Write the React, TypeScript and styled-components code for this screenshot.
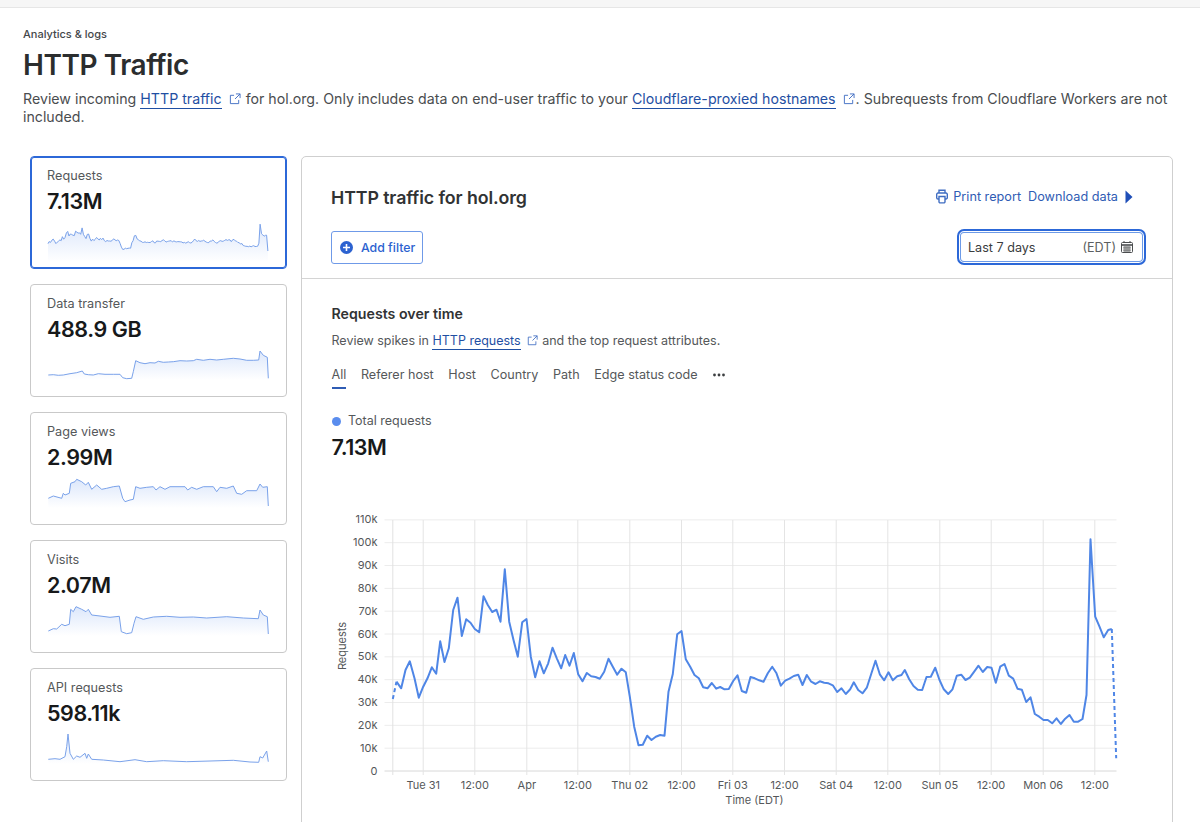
import React from "react";
import styled, { createGlobalStyle } from "styled-components";

type P = [number, number];

const GlobalStyle = createGlobalStyle`
  html, body { margin: 0; padding: 0; height: 822px; overflow: hidden; background: #fff; }
  body { font-family: Inter, "Liberation Sans", sans-serif; color: #36393a; -webkit-font-smoothing: antialiased; }
  * { box-sizing: border-box; }
`;

const TopBar = styled.div`
  height: 8px;
  background: #f6f6f6;
  border-bottom: 1px solid #e6e6e6;
`;
const PageHead = styled.header`
  padding: 18px 23px 0;
`;
const Crumb = styled.div`
  font-size: 11px;
  line-height: 16px;
  font-weight: 500;
  color: #44474a;
`;
const Title = styled.h1`
  margin: 5px 0 0;
  font-size: 28px;
  line-height: 36px;
  font-weight: 600;
  letter-spacing: -0.45px;
  color: #2b2d2e;
`;
const Description = styled.p`
  margin: 7px 0 0;
  font-size: 14.2px;
  line-height: 18px;
  color: #4a4d4f;
`;
const DocLink = styled.a`
  color: #1f4fa3;
  border-bottom: 1px solid #1f4fa3;
  padding-bottom: 1px;
`;
const ExtIcon = styled.svg<{ $gap: number }>`
  display: inline-block;
  vertical-align: -1px;
  margin: 0 1px 0 ${(p) => p.$gap}px;
  color: #3f6dc2;
`;
const Content = styled.main`
  display: flex;
  gap: 14px;
  margin-top: 30px;
  padding: 0 27px 0 30px;
  align-items: flex-start;
`;
const Sidebar = styled.aside`
  width: 257px;
  flex: none;
  display: flex;
  flex-direction: column;
  gap: 15px;
`;
const MetricCard = styled.section<{ $active?: boolean }>`
  height: 113px;
  border: 1px solid ${(p) => (p.$active ? "#2c68d8" : "#c9c9c9")};
  box-shadow: ${(p) => (p.$active ? "inset 0 0 0 1px #2c68d8" : "none")};
  border-radius: 4px;
  padding: 11px 0 0;
  display: flex;
  flex-direction: column;
  background: #fff;
`;
const MetricLabel = styled.div`
  margin-left: 16px;
  font-size: 12.7px;
  line-height: 16px;
  color: #55585a;
`;
const MetricValue = styled.div`
  margin: 3px 0 0 16px;
  font-size: 21.5px;
  line-height: 28px;
  font-weight: 600;
  letter-spacing: -0.4px;
  color: #17191a;
`;
const Spark = styled.svg`
  display: block;
  flex: none;
  margin-top: auto;
`;
const Panel = styled.section`
  flex: 1;
  height: 760px;
  border: 1px solid #cfcfcf;
  border-radius: 5px 5px 0 0;
  background: #fff;
`;
const PanelHead = styled.div`
  padding: 23px 26px 13px 29px;
  border-bottom: 1px solid #d4d4d4;
  height: 122px;
`;
const HeadRow = styled.div<{ $second?: boolean }>`
  display: flex;
  justify-content: space-between;
  align-items: center;
  height: 36px;
  margin-top: ${(p) => (p.$second ? "13px" : "0")};
`;
const PanelTitle = styled.h2`
  margin: 0;
  font-size: 17.8px;
  line-height: 24px;
  font-weight: 600;
  letter-spacing: -0.1px;
  color: #313334;
`;
const HeadActions = styled.div`
  display: flex;
  align-items: center;
  margin: -3px 13px 0 0;
  font-size: 12.7px;
  line-height: 16px;
  color: #2f5cb4;
`;
const ActionText = styled.span`
  margin-right: 7px;
`;
const PrintIcon = styled.svg`
  margin-right: 5px;
`;
const AddFilter = styled.button`
  width: 92px;
  height: 33px;
  display: flex;
  align-items: center;
  gap: 8px;
  padding: 0 0 0 8px;
  background: #fff;
  border: 1px solid #6f9ae8;
  border-radius: 3px;
  font: 500 12.3px Inter, "Liberation Sans", sans-serif;
  color: #2c62d0;
`;
const DateBox = styled.div`
  width: 189px;
  height: 36px;
  display: flex;
  align-items: center;
  padding: 0 11px 0 9px;
  border: 2px solid #2c68d8;
  border-radius: 7px;
  box-shadow: inset 0 0 0 1px #fff, inset 0 0 0 2px #6d9be8;
  font-size: 12.6px;
  color: #3a3d3e;
`;
const DateTz = styled.span`
  margin-left: auto;
  margin-right: 5px;
  color: #5c5f61;
`;
const PanelBody = styled.div`
  padding: 25px 0 0 29.5px;
`;
const SectionTitle = styled.h3`
  margin: 0;
  font-size: 14.2px;
  line-height: 20px;
  font-weight: 600;
  color: #313334;
`;
const SectionText = styled.p`
  margin: 7px 0 0;
  font-size: 12.5px;
  line-height: 20px;
  color: #55585a;
`;
const Tabs = styled.nav`
  margin-top: 14px;
  display: flex;
  align-items: flex-start;
  gap: 14.6px;
  font-size: 12.6px;
  line-height: 20px;
  height: 24px;
  color: #55585a;
`;
const Tab = styled.span<{ $active?: boolean }>`
  display: block;
  height: 24px;
  border-bottom: ${(p) => (p.$active ? "2px solid #2f5cb4" : "none")};
`;
const More = styled.svg`
  margin: 8px 0 0 1px;
`;
const LegendRow = styled.div`
  margin-top: 22px;
  display: flex;
  align-items: center;
  gap: 7.5px;
  font-size: 12.5px;
  line-height: 20px;
  color: #55585a;
`;
const LegendDot = styled.span`
  width: 9px;
  height: 9px;
  border-radius: 50%;
  background: #5a8dee;
`;
const TotalValue = styled.div`
  margin-top: 2px;
  font-size: 21.5px;
  line-height: 28px;
  font-weight: 600;
  letter-spacing: -0.5px;
  color: #17191a;
`;
const Chart = styled.svg`
  display: block;
  margin-top: 44px;
  overflow: hidden;
`;
const AxisLabel = styled.text`
  font-family: Inter, "Liberation Sans", sans-serif;
  font-size: 11px;
  fill: #55585a;
`;

const map = (l: P[], ox: number, oy: number): P[] => l.map(([x, y]) => [ox + x / 3, oy + y / 3]);
const str = (l: P[]) => l.map(([x, y]) => `${x.toFixed(1)},${y.toFixed(1)}`).join(" ");

const headDash = map([[187, 597], [198, 545]], 330, 500);
const solid: P[] = [
  ...map([[198,545],[212,565],[225,510],[238,484],[252,535],[265,593],[278,560],[291,535],[304,502],[317,521],[329,424],[342,486],[355,445],[368,330],[381,293],[394,408],[407,358],[420,368],[433,387],[446,397],[459,289],[472,315],[485,336],[498,329],[510,365],[523,208],[536,365],[549,420],[562,470],[575,367],[588,357],[601,470],[614,532],[627,484],[640,520],[653,490],[666,443],[679,475],[692,505],[704,465],[717,497],[730,459],[743,523],[756,544],[769,519],[782,529],[795,531],[808,536],[821,515],[834,476],[847,500],[860,524],[873,506],[886,517]], 330, 500),
  ...map([[28,590],[41,680],[54,736],[67,734],[80,707],[93,720],[106,710],[119,705],[132,707],[144,575],[157,522],[170,403],[183,393],[196,478],[209,500],[222,525],[235,535],[248,562],[261,565],[274,549],[287,566],[299,561],[312,568],[325,567],[338,543],[351,526],[364,573],[377,578],[390,531],[403,535],[416,541],[429,545],[442,520],[455,500],[468,520],[481,557],[494,542],[507,536],[520,528],[533,524],[546,555],[559,525],[572,545],[585,552],[598,544],[611,548],[624,550],[637,556],[650,576],[663,565],[676,582],[689,568],[700,547],[713,570],[726,580],[739,563],[752,522],[765,482],[778,523],[791,541],[804,517],[817,541],[830,529],[843,525]], 620, 500),
  ...map([[13,510],[26,538],[39,558],[52,569],[65,570],[78,531],[91,530],[104,503],[117,540],[130,568],[143,582],[156,568],[169,527],[182,524],[195,540],[208,533],[221,515],[234,497],[247,516],[260,501],[273,503],[286,548],[299,500],[312,492],[325,527],[338,536],[351,566],[364,569],[377,606],[390,592],[403,642],[416,650],[429,660],[442,660],[455,670],[468,655],[481,672],[494,656],[507,645],[520,665],[533,665],[546,657],[558,585],[570,118],[584,350],[597,380],[610,412],[623,390],[634,387]], 900, 500),
];
const tailDash = map([[634, 387], [647, 775]], 900, 500);

const requestsSpark: P[] = [...headDash, ...solid, tailDash[1]].map(([x, y]) => [
  48 + ((x - 392.3) / 723.7) * 220,
  252.5 - (771 - y) * 0.122,
]);

const metrics: { label: string; value: string; top: number; base: number; line: P[] }[] = [
  { label: "Requests", value: "7.13M", top: 156, base: 262, line: requestsSpark },
  { label: "Data transfer", value: "488.9 GB", top: 284, base: 380, line: map([[85,285],[100,284],[115,286],[130,285],[150,281],[170,278],[187,273],[193,282],[205,284],[220,285],[235,281],[255,283],[280,283],[300,283],[308,293],[320,296],[335,295],[340,275],[347,242],[360,248],[375,251],[390,248],[405,249],[415,244],[430,247],[445,246],[460,245],[480,242],[500,243],[520,242],[530,238],[550,241],[570,238],[590,240],[610,238],[640,235],[660,237],[680,241],[700,241],[716,240],[720,213],[730,226],[742,232],[745,295]], 20, 280) },
  { label: "Page views", value: "2.99M", top: 412, base: 508, line: map([[85,655],[100,648],[125,655],[130,640],[135,645],[148,640],[152,610],[165,605],[170,598],[185,605],[197,615],[205,607],[215,628],[230,615],[245,628],[260,625],[280,620],[298,618],[308,655],[315,665],[330,660],[340,658],[347,620],[360,625],[380,622],[400,620],[408,630],[420,620],[435,628],[450,620],[480,620],[495,620],[503,630],[515,622],[530,628],[550,620],[580,620],[590,635],[600,622],[620,625],[640,618],[650,640],[665,643],[680,632],[710,632],[720,612],[728,622],[742,620],[745,678]], 20, 280) },
  { label: "Visits", value: "2.07M", top: 540, base: 636, line: map([[85,303],[100,296],[110,297],[125,283],[135,287],[148,283],[152,238],[160,245],[168,230],[185,238],[198,245],[205,238],[215,255],[240,258],[270,262],[298,259],[304,305],[320,311],[335,308],[342,280],[348,260],[370,268],[400,261],[440,259],[480,262],[520,261],[560,264],[620,260],[670,264],[715,266],[720,240],[730,255],[742,260],[745,312]], 20, 530) },
  { label: "API requests", value: "598.11k", top: 668, base: 764, line: map([[85,688],[105,686],[120,688],[135,680],[140,650],[144,612],[150,670],[160,688],[170,678],[180,682],[195,670],[200,685],[205,672],[215,688],[250,690],[300,695],[345,689],[380,695],[430,692],[500,695],[570,693],[640,691],[690,696],[716,697],[720,680],[728,684],[740,663],[745,695]], 20, 530) },
];

const yTicks = Array.from({ length: 12 }, (_, i) => i);
const yOf = (i: number) => 771 - i * 22.83;
const xTicks: [number, string][] = [
  [422.7, "Tue 31"], [474.3, "12:00"], [526.3, "Apr"], [577.3, "12:00"], [629.3, "Thu 02"], [681, "12:00"],
  [732.3, "Fri 03"], [784, "12:00"], [835.7, "Sat 04"], [887.3, "12:00"], [939.3, "Sun 05"], [990.7, "12:00"],
  [1042.7, "Mon 06"], [1094.3, "12:00"],
];

const External = ({ size = 12, gap = 7 }: { size?: number; gap?: number }) => (
  <ExtIcon $gap={gap} width={size} height={size} viewBox="0 0 13 13" fill="none" stroke="currentColor" strokeWidth="1">
    <path d="M5.5 2.5H1.5v9h9V7.5" />
    <path d="M7.5 1h4.5v4.5M12 1 6.5 6.5" />
  </ExtIcon>
);

const Sparkline = ({ top, base, line }: { top: number; base: number; line: P[] }) => {
  const id = `spark-${top}`;
  const first = line[0];
  const last = line[line.length - 1];
  return (
    <Spark width="255" height="53" viewBox={`31 ${top + 59} 255 53`}>
      <defs>
        <linearGradient id={id} x1="0" y1="0" x2="0" y2="1">
          <stop offset="0" stopColor="#dce7fb" />
          <stop offset="1" stopColor="#ffffff" />
        </linearGradient>
      </defs>
      <polygon points={`${str(line)} ${last[0]},${base} ${first[0]},${base}`} fill={`url(#${id})`} />
      <polyline points={str(line)} fill="none" stroke="#7aa2ea" strokeWidth="1" strokeLinejoin="round" />
    </Spark>
  );
};

export default function App() {
  return (
    <>
      <GlobalStyle />
      <TopBar />
      <PageHead>
        <Crumb>Analytics &amp; logs</Crumb>
        <Title>HTTP Traffic</Title>
        <Description>
          Review incoming <DocLink>HTTP traffic</DocLink>
          <External /> for hol.org. Only includes data on end-user traffic to your{" "}
          <DocLink>Cloudflare-proxied hostnames</DocLink>
          <External />. Subrequests from Cloudflare Workers are not included.
        </Description>
      </PageHead>
      <Content>
        <Sidebar>
          {metrics.map((m, i) => (
            <MetricCard key={m.label} $active={i === 0}>
              <MetricLabel>{m.label}</MetricLabel>
              <MetricValue>{m.value}</MetricValue>
              <Sparkline top={m.top} base={m.base} line={m.line} />
            </MetricCard>
          ))}
        </Sidebar>
        <Panel>
          <PanelHead>
            <HeadRow>
              <PanelTitle>HTTP traffic for hol.org</PanelTitle>
              <HeadActions>
                <PrintIcon width="12" height="15" viewBox="0 0 12 15" fill="none" stroke="#3f6dc2" strokeWidth="1.4">
                  <path d="M3 4V1.2h6V4" />
                  <path d="M3 10H2a1.3 1.3 0 0 1-1.3-1.3V5.3A1.3 1.3 0 0 1 2 4h8a1.3 1.3 0 0 1 1.3 1.3v3.4A1.3 1.3 0 0 1 10 10H9" />
                  <path d="M3 7.5h6v5.2a1.2 1.2 0 0 1-1.2 1.2H4.2A1.2 1.2 0 0 1 3 12.7z" />
                </PrintIcon>
                <ActionText>Print report</ActionText>
                <ActionText>Download data</ActionText>
                <svg width="8" height="14" viewBox="0 0 8 14">
                  <path d="M0.5 0.5 7.5 7 0.5 13.5z" fill="#1f4fb8" />
                </svg>
              </HeadActions>
            </HeadRow>
            <HeadRow $second>
              <AddFilter>
                <svg width="13" height="13" viewBox="0 0 13 13">
                  <circle cx="6.5" cy="6.5" r="6.5" fill="#2c62d0" />
                  <path d="M6.5 3v7M3 6.5h7" stroke="#fff" strokeWidth="1.6" />
                </svg>
                Add filter
              </AddFilter>
              <DateBox>
                Last 7 days
                <DateTz>(EDT)</DateTz>
                <svg width="12" height="12" viewBox="0 0 12 12" fill="none" stroke="#4a4d4f" strokeWidth="1">
                  <rect x="0.5" y="1.5" width="11" height="10" rx="1" />
                  <path d="M0.5 4h11" strokeWidth="1.6" />
                  <path d="M3 0v2M9 0v2" />
                  <path d="M2 6.2h8M2 8h8M2 9.8h8M4 5v6M6 5v6M8 5v6" strokeWidth="0.7" />
                </svg>
              </DateBox>
            </HeadRow>
          </PanelHead>
          <PanelBody>
            <SectionTitle>Requests over time</SectionTitle>
            <SectionText>
              Review spikes in <DocLink>HTTP requests</DocLink>
              <External size={11} gap={6} /> and the top request attributes.
            </SectionText>
            <Tabs>
              <Tab $active>All</Tab>
              <Tab>Referer host</Tab>
              <Tab>Host</Tab>
              <Tab>Country</Tab>
              <Tab>Path</Tab>
              <Tab>Edge status code</Tab>
              <More width="12" height="4" viewBox="0 0 12 4" fill="#3c3f41">
                <circle cx="1.5" cy="2" r="1.4" />
                <circle cx="6" cy="2" r="1.4" />
                <circle cx="10.5" cy="2" r="1.4" />
              </More>
            </Tabs>
            <LegendRow>
              <LegendDot />
              Total requests
            </LegendRow>
            <TotalValue>7.13M</TotalValue>
            <Chart width="810" height="317" viewBox="331.5 505 810 317">
              {yTicks.map((i) => (
                <g key={i}>
                  <line x1="384" x2="1116" y1={yOf(i)} y2={yOf(i)} stroke={i === 0 ? "#d8d8d8" : "#ececec"} strokeWidth="1" />
                  <AxisLabel x="377" y={yOf(i) + 3.5} textAnchor="end">
                    {i === 0 ? "0" : `${i * 10}k`}
                  </AxisLabel>
                </g>
              ))}
              <line x1="392.3" x2="392.3" y1="520" y2="775" stroke="#e2e2e2" />
              {xTicks.map(([x, t], i) => (
                <g key={i}>
                  <line x1={x} x2={x} y1="520" y2="775" stroke="#e4e4e4" />
                  <AxisLabel x={x} y="789" textAnchor="middle">
                    {t}
                  </AxisLabel>
                </g>
              ))}
              <AxisLabel x="754" y="804" textAnchor="middle">
                Time (EDT)
              </AxisLabel>
              <AxisLabel transform="translate(345 646) rotate(-90)" textAnchor="middle">
                Requests
              </AxisLabel>
              <polyline points={str(headDash)} fill="none" stroke="#4f86e6" strokeWidth="2" strokeDasharray="4 3" />
              <polyline points={str(solid)} fill="none" stroke="#4f86e6" strokeWidth="2" strokeLinejoin="round" />
              <polyline points={str(tailDash)} fill="none" stroke="#4f86e6" strokeWidth="2" strokeDasharray="4 3" />
            </Chart>
          </PanelBody>
        </Panel>
      </Content>
    </>
  );
}
